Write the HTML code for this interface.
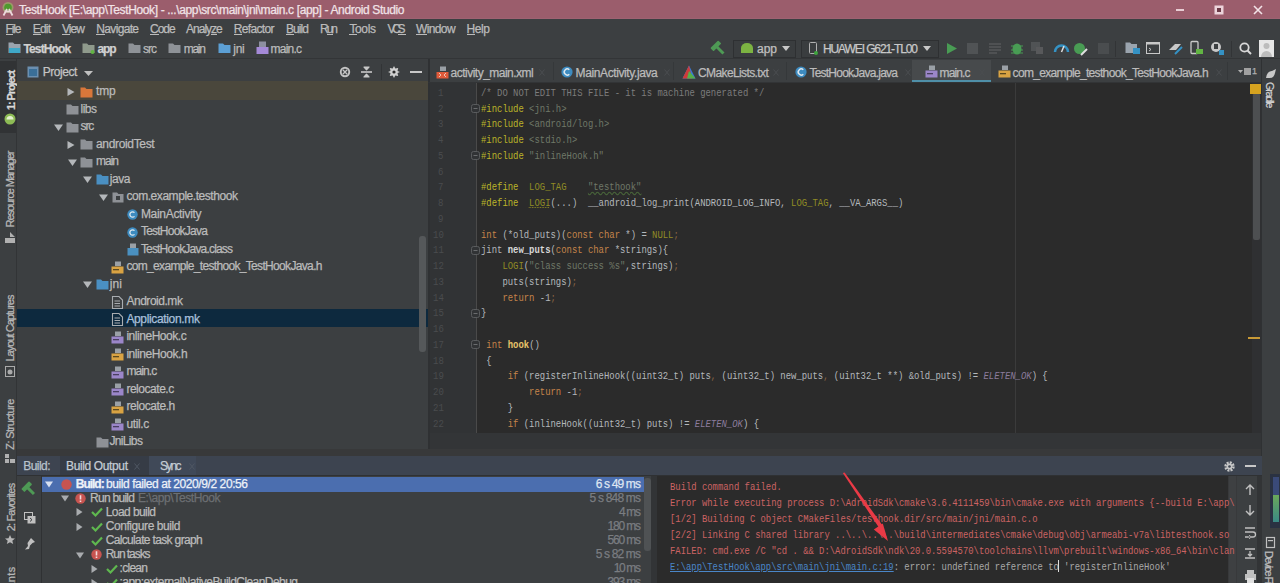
<!DOCTYPE html>
<html><head><meta charset="utf-8">
<style>
*{margin:0;padding:0;box-sizing:border-box}
html,body{width:1280px;height:583px;overflow:hidden;background:#3c3f41;font-family:"Liberation Sans",sans-serif;font-size:12px;color:#bbbbbb;position:relative}
.a{position:absolute}
.t{position:absolute;white-space:pre;-webkit-text-stroke:0.25px currentColor}
.c{position:absolute;white-space:pre;font-family:"Liberation Mono",monospace;color:#b4b8bc}
svg{overflow:visible}
</style></head><body>
<div class="a" style="left:0px;top:0px;width:1280px;height:19px;background:#9b5d6c;"></div>
<div class="a" style="left:0px;top:18px;width:1280px;height:1px;background:#9e6272;"></div>
<svg class="a" style="left:0px;top:0px;" width="18" height="19" viewBox="0 0 18 19"><circle cx="8" cy="7.5" r="5.5" fill="#9cc86a" opacity=".55"/><circle cx="8" cy="7.5" r="3.8" fill="#4f9a2e"/><path d="M3.5 15.5 L7 9 M12.5 15.5 L9 9 M4.5 11.5 H11.5" stroke="#ecd8dc" stroke-width="1.8" fill="none"/></svg>
<div class="t" style="left:19.00px;top:3.96px;color:#f1e3e7;font-size:12px;line-height:12px;letter-spacing:-0.359px;">TestHook [E:\app\TestHook] - ...\app\src\main\jni\main.c [app] - Android Studio</div>
<div class="a" style="left:1176px;top:9px;width:8px;height:2px;background:#e8cdd4;"></div>
<svg class="a" style="left:1214px;top:5px;" width="10" height="10" viewBox="0 0 10 10"><rect x="0.5" y="0.5" width="9" height="9" fill="#ecd3da"/><rect x="3" y="3" width="4" height="4" fill="#6b3a47"/></svg>
<svg class="a" style="left:1253px;top:5px;" width="10" height="10" viewBox="0 0 10 10"><path d="M1 1 L9 9 M9 1 L1 9" stroke="#f3e3e8" stroke-width="1.6"/></svg>
<div class="a" style="left:0px;top:19px;width:1280px;height:18px;background:#3c3f41;"></div>
<div class="t" style="left:5.60px;top:22.96px;color:#bbbbbb;font-size:12px;line-height:12px;letter-spacing:-1.207px;">File</div>
<div class="a" style="left:5.6px;top:34px;width:7.3px;height:1px;background:#bbbbbb;"></div>
<div class="t" style="left:32.80px;top:22.96px;color:#bbbbbb;font-size:12px;line-height:12px;letter-spacing:-0.833px;">Edit</div>
<div class="a" style="left:32.8px;top:34px;width:8.0px;height:1px;background:#bbbbbb;"></div>
<div class="t" style="left:61.90px;top:22.96px;color:#bbbbbb;font-size:12px;line-height:12px;letter-spacing:-0.900px;">View</div>
<div class="a" style="left:61.9px;top:34px;width:8.0px;height:1px;background:#bbbbbb;"></div>
<div class="t" style="left:96.30px;top:22.96px;color:#bbbbbb;font-size:12px;line-height:12px;letter-spacing:-0.663px;">Navigate</div>
<div class="a" style="left:96.3px;top:34px;width:8.7px;height:1px;background:#bbbbbb;"></div>
<div class="t" style="left:150.00px;top:22.96px;color:#bbbbbb;font-size:12px;line-height:12px;letter-spacing:-1.027px;">Code</div>
<div class="a" style="left:150.0px;top:34px;width:8.7px;height:1px;background:#bbbbbb;"></div>
<div class="t" style="left:186.00px;top:22.96px;color:#bbbbbb;font-size:12px;line-height:12px;letter-spacing:-0.987px;">Analyze</div>
<div class="a" style="left:211.1px;top:34px;width:6.0px;height:1px;background:#bbbbbb;"></div>
<div class="t" style="left:233.80px;top:22.96px;color:#bbbbbb;font-size:12px;line-height:12px;letter-spacing:-0.680px;">Refactor</div>
<div class="a" style="left:233.8px;top:34px;width:8.7px;height:1px;background:#bbbbbb;"></div>
<div class="t" style="left:286.00px;top:22.96px;color:#bbbbbb;font-size:12px;line-height:12px;letter-spacing:-0.925px;">Build</div>
<div class="a" style="left:286.0px;top:34px;width:8.0px;height:1px;background:#bbbbbb;"></div>
<div class="t" style="left:320.00px;top:22.96px;color:#bbbbbb;font-size:12px;line-height:12px;letter-spacing:-2.010px;">Run</div>
<div class="a" style="left:326.7px;top:34px;width:6.7px;height:1px;background:#bbbbbb;"></div>
<div class="t" style="left:349.40px;top:22.96px;color:#bbbbbb;font-size:12px;line-height:12px;letter-spacing:-0.355px;">Tools</div>
<div class="a" style="left:349.4px;top:34px;width:7.3px;height:1px;background:#bbbbbb;"></div>
<div class="t" style="left:387.50px;top:22.96px;color:#bbbbbb;font-size:12px;line-height:12px;letter-spacing:-3.280px;">VCS</div>
<div class="a" style="left:397.6px;top:34px;width:8.0px;height:1px;background:#bbbbbb;"></div>
<div class="t" style="left:416.00px;top:22.96px;color:#bbbbbb;font-size:12px;line-height:12px;letter-spacing:-0.624px;">Window</div>
<div class="a" style="left:416.0px;top:34px;width:11.3px;height:1px;background:#bbbbbb;"></div>
<div class="t" style="left:466.60px;top:22.96px;color:#bbbbbb;font-size:12px;line-height:12px;letter-spacing:-0.420px;">Help</div>
<div class="a" style="left:466.6px;top:34px;width:8.7px;height:1px;background:#bbbbbb;"></div>
<div class="a" style="left:0px;top:37px;width:1280px;height:22px;background:#3c3f41;"></div>
<div class="a" style="left:0px;top:58px;width:1280px;height:1px;background:#333537;"></div>
<svg class="a" style="left:8px;top:41px;" width="13" height="14" viewBox="0 0 13 14"><path d="M0.5 1.5 H5 L6.5 3 H12.5 V12 H0.5 Z" fill="#9aa4ae"/><rect x="1" y="7" width="11" height="5" fill="#3fa8c8"/></svg>
<div class="t" style="left:23.40px;top:42.96px;color:#d0d0d0;font-size:12px;line-height:12px;letter-spacing:-0.846px;font-weight:bold;">TestHook</div>
<svg class="a" style="left:82px;top:42px;" width="13" height="12" viewBox="0 0 13 12"><path d="M0.5 1.5 H5 L6.5 3 H12.5 V11 H0.5 Z" fill="#8f9a8c"/><circle cx="10.5" cy="10" r="2" fill="#62b543"/></svg>
<div class="t" style="left:97.50px;top:42.96px;color:#d0d0d0;font-size:12px;line-height:12px;letter-spacing:-1.180px;font-weight:bold;">app</div>
<svg class="a" style="left:128px;top:42px;" width="13" height="12" viewBox="0 0 13 12"><path d="M0.5 1.5 H5 L6.5 3 H12.5 V11 H0.5 Z" fill="#8e9297"/></svg>
<div class="t" style="left:143.00px;top:42.96px;color:#bbbbbb;font-size:12px;line-height:12px;letter-spacing:-1.010px;">src</div>
<svg class="a" style="left:168px;top:42px;" width="13" height="12" viewBox="0 0 13 12"><path d="M0.5 1.5 H5 L6.5 3 H12.5 V11 H0.5 Z" fill="#8e9297"/></svg>
<div class="t" style="left:183.70px;top:42.96px;color:#bbbbbb;font-size:12px;line-height:12px;letter-spacing:-1.247px;">main</div>
<svg class="a" style="left:218px;top:42px;" width="13" height="12" viewBox="0 0 13 12"><path d="M0.5 1.5 H5 L6.5 3 H12.5 V11 H0.5 Z" fill="#5c9fd4"/></svg>
<div class="t" style="left:233.30px;top:42.96px;color:#bbbbbb;font-size:12px;line-height:12px;letter-spacing:-0.300px;">jni</div>
<svg class="a" style="left:256px;top:41px;" width="13" height="14" viewBox="0 0 13 14"><rect x="3" y="0.5" width="7" height="6" fill="#8d8fa0"/><rect x="0.5" y="6" width="12" height="7" fill="#a58ad8"/></svg>
<div class="t" style="left:270.60px;top:42.96px;color:#bbbbbb;font-size:12px;line-height:12px;letter-spacing:-0.788px;">main.c</div>
<svg class="a" style="left:711px;top:41px;" width="15" height="15" viewBox="0 0 15 15"><g transform="rotate(-45 7.5 7.5)"><rect x="2" y="1.5" width="11" height="4.5" rx="0.8" fill="#4e9a55"/><rect x="6" y="5" width="3" height="9.5" fill="#4e9a55"/></g></svg>
<div class="a" style="left:733px;top:40px;width:63px;height:18px;background:#3a3d3f;border:1px solid #2e3032"></div>
<svg class="a" style="left:740px;top:43px;" width="14" height="11" viewBox="0 0 14 11"><path d="M1 10 V5 A6 5 0 0 1 13 5 V10 Z" fill="#7cb342"/></svg>
<div class="t" style="left:757.00px;top:42.96px;color:#c0c0c0;font-size:12px;line-height:12px;letter-spacing:-0.020px;">app</div>
<svg class="a" style="left:782px;top:46px;" width="8" height="5" viewBox="0 0 8 5"><path d="M0 0 H8 L4 5 Z" fill="#c8c8c8"/></svg>
<div class="a" style="left:801px;top:40px;width:138px;height:18px;background:#3a3d3f;border:1px solid #2e3032"></div>
<svg class="a" style="left:809px;top:42px;" width="9" height="13" viewBox="0 0 9 13"><rect x="0.5" y="0.5" width="7" height="11" rx="1" fill="none" stroke="#b0b0b0"/><circle cx="7" cy="11" r="2" fill="#3ea63e"/></svg>
<div class="t" style="left:823.00px;top:42.96px;color:#c8c8c8;font-size:12px;line-height:12px;letter-spacing:-1.107px;">HUAWEI G621-TL00</div>
<svg class="a" style="left:923px;top:46px;" width="8" height="5" viewBox="0 0 8 5"><path d="M0 0 H8 L4 5 Z" fill="#c8c8c8"/></svg>
<svg class="a" style="left:946px;top:42px;" width="12" height="13" viewBox="0 0 12 13"><path d="M1 1 L11 6.5 L1 12 Z" fill="#499c54"/></svg>
<svg class="a" style="left:967px;top:43px;" width="11" height="11" viewBox="0 0 11 11"><rect x="0" y="0" width="11" height="11" fill="#505355"/></svg>
<svg class="a" style="left:989px;top:43px;" width="12" height="11" viewBox="0 0 12 11"><path d="M0 1H12M0 4H12M0 7H12M0 10H8" stroke="#55585a" stroke-width="1.5"/></svg>
<svg class="a" style="left:1010px;top:41px;" width="14" height="14" viewBox="0 0 14 14"><ellipse cx="7" cy="8" rx="4.5" ry="5.5" fill="#499c54"/><path d="M1 5H13M1 9H13M1 12H13" stroke="#499c54" stroke-width="1.2"/></svg>
<svg class="a" style="left:1031px;top:42px;" width="12" height="12" viewBox="0 0 12 12"><rect x="0" y="0" width="9" height="9" fill="#505355"/><rect x="5" y="5" width="7" height="7" fill="#58595b"/></svg>
<svg class="a" style="left:1054px;top:42px;" width="15" height="12" viewBox="0 0 15 12"><path d="M1 10 A6.5 6.5 0 0 1 14 10" fill="none" stroke="#3592c4" stroke-width="2.5"/><path d="M7.5 10 L10 4" stroke="#e0e0e0" stroke-width="1.5"/></svg>
<svg class="a" style="left:1073px;top:41px;" width="15" height="15" viewBox="0 0 15 15"><circle cx="6.5" cy="7.5" r="5.5" fill="#499c54"/><path d="M8 14 L14 8" stroke="#e0e0e0" stroke-width="2"/></svg>
<svg class="a" style="left:1098px;top:43px;" width="11" height="11" viewBox="0 0 11 11"><rect x="0" y="0" width="11" height="11" fill="#4a4d4f"/></svg>
<div class="a" style="left:1115px;top:41px;width:1px;height:16px;background:#323436;"></div>
<svg class="a" style="left:1125px;top:41px;" width="16" height="14" viewBox="0 0 16 14"><path d="M0.5 1.5 H5 L6.5 3 H12 V12 H0.5 Z" fill="#9aa4ae"/><rect x="8" y="7" width="7" height="6" fill="#3592c4"/></svg>
<svg class="a" style="left:1146px;top:42px;" width="14" height="12" viewBox="0 0 14 12"><rect x="0.5" y="0.5" width="13" height="11" fill="none" stroke="#c8c8c8"/><rect x="0.5" y="0.5" width="13" height="2" fill="#c8c8c8"/><path d="M3 6 L5 7.5 L3 9" stroke="#c8c8c8" fill="none"/></svg>
<svg class="a" style="left:1168px;top:41px;" width="15" height="14" viewBox="0 0 15 14"><path d="M1 9 L7 3 L13 3 L8 9 Z" fill="#c8c8c8"/><path d="M7 13 L14 6" stroke="#3592c4" stroke-width="2"/></svg>
<svg class="a" style="left:1190px;top:41px;" width="14" height="14" viewBox="0 0 14 14"><rect x="1" y="0.5" width="7" height="12" rx="1" fill="none" stroke="#c8c8c8" stroke-width="1.3"/><rect x="6" y="8" width="7" height="5" fill="#62b543"/></svg>
<svg class="a" style="left:1210px;top:41px;" width="15" height="15" viewBox="0 0 15 15"><circle cx="6" cy="6" r="5" fill="#c8c8c8"/><rect x="4" y="3" width="4" height="5" fill="#3c3f41"/><rect x="9" y="9" width="5" height="5" fill="#3592c4"/></svg>
<div class="a" style="left:1231px;top:41px;width:1px;height:16px;background:#323436;"></div>
<svg class="a" style="left:1239px;top:42px;" width="13" height="13" viewBox="0 0 13 13"><circle cx="5.5" cy="5.5" r="4.2" fill="none" stroke="#d8d8d8" stroke-width="1.8"/><path d="M8.5 8.5 L12 12" stroke="#d8d8d8" stroke-width="2"/></svg>
<svg class="a" style="left:1259px;top:40px;" width="15" height="17" viewBox="0 0 15 17"><rect x="0" y="0" width="15" height="17" fill="#e6e6e6"/><circle cx="7.5" cy="6" r="3" fill="#bcbcbc"/><path d="M2 17 A5.5 6 0 0 1 13 17 Z" fill="#bcbcbc"/></svg>
<div class="a" style="left:0px;top:59px;width:17px;height:524px;background:#3c3f41;"></div>
<div class="a" style="left:16px;top:59px;width:1px;height:524px;background:#323436;"></div>
<div class="a" style="left:0px;top:61px;width:16px;height:72px;background:#313335;"></div>
<div class="t" style="left:-11.20px;top:85.18px;width:44.00px;font-size:11px;line-height:11px;letter-spacing:-1.123px;color:#d8d8d8;transform:rotate(-90deg);text-align:center;font-weight:bold">1: Project</div>
<svg class="a" style="left:4px;top:113px;" width="12" height="12" viewBox="0 0 12 12"><circle cx="6" cy="6" r="5.5" fill="#8dbb55"/><path d="M2.5 6.5 A3.5 3.5 0 0 1 9.5 6.5 Z" fill="#e4f0d0"/></svg>
<div class="t" style="left:-29.70px;top:183.68px;width:81.00px;font-size:11px;line-height:11px;letter-spacing:-1.104px;color:#b8b8b8;transform:rotate(-90deg);text-align:center;">Resource Manager</div>
<svg class="a" style="left:5px;top:232px;" width="10" height="11" viewBox="0 0 10 11"><path d="M5 0 L10 5 L5 5 Z M0 6H5V11H0Z M5 6H10V11H5Z" fill="#b0b0b0"/></svg>
<div class="t" style="left:-24.70px;top:322.68px;width:71.00px;font-size:11px;line-height:11px;letter-spacing:-0.981px;color:#b8b8b8;transform:rotate(-90deg);text-align:center;">Layout Captures</div>
<svg class="a" style="left:5px;top:366px;" width="10" height="11" viewBox="0 0 10 11"><rect x="0.5" y="0.5" width="9" height="10" fill="none" stroke="#aaa"/><circle cx="5" cy="6" r="2.5" fill="#aaa"/></svg>
<div class="t" style="left:-16.70px;top:418.68px;width:55.00px;font-size:11px;line-height:11px;letter-spacing:-0.589px;color:#b8b8b8;transform:rotate(-90deg);text-align:center;">Z: Structure</div>
<svg class="a" style="left:5px;top:454px;" width="10" height="9" viewBox="0 0 10 9"><rect x="0" y="0" width="4" height="4" fill="#b0b0b0"/><rect x="5" y="5" width="5" height="4" fill="#b0b0b0"/><rect x="0" y="5" width="4" height="4" fill="#b0b0b0"/></svg>
<div class="t" style="left:-15.45px;top:501.93px;width:52.50px;font-size:11px;line-height:11px;letter-spacing:-0.816px;color:#b8b8b8;transform:rotate(-90deg);text-align:center;">2: Favorites</div>
<svg class="a" style="left:5px;top:535px;" width="10" height="9" viewBox="0 0 10 9"><path d="M5 0 L6.5 3.2 L10 3.5 L7.3 5.8 L8.2 9 L5 7.2 L1.8 9 L2.7 5.8 L0 3.5 L3.5 3.2 Z" fill="#b8b8b8"/></svg>
<div class="t" style="left:-27.20px;top:597.18px;width:76.00px;font-size:11px;line-height:11px;letter-spacing:0.381px;color:#b8b8b8;transform:rotate(-90deg);text-align:center;">Build Variants</div>
<div class="a" style="left:17px;top:59px;width:411px;height:397px;background:#3c3f41;"></div>
<div class="a" style="left:17px;top:82px;width:411px;height:1px;background:#35373a;"></div>
<svg class="a" style="left:27px;top:66px;" width="12" height="12" viewBox="0 0 12 12"><rect x="0.5" y="0.5" width="11" height="11" fill="#6b8fb0"/><rect x="2" y="3" width="8" height="7" fill="#3a6f98"/></svg>
<div class="t" style="left:42.80px;top:66.46px;color:#c4c4c4;font-size:12px;line-height:12px;letter-spacing:-0.487px;">Project</div>
<svg class="a" style="left:84px;top:71px;" width="9" height="5" viewBox="0 0 9 5"><path d="M0 0 H9 L4.5 5 Z" fill="#c0c0c0"/></svg>
<svg class="a" style="left:339px;top:66px;" width="12" height="12" viewBox="0 0 12 12"><circle cx="6" cy="6" r="5.2" fill="#c4c4c4"/><circle cx="6" cy="6" r="3.3" fill="#3c3f41"/><path d="M3.8 3.8 L8.2 8.2 M8.2 3.8 L3.8 8.2" stroke="#c4c4c4" stroke-width="1.3"/></svg>
<svg class="a" style="left:361px;top:66px;" width="11" height="12" viewBox="0 0 11 12"><path d="M0 6 H11" stroke="#c8c8c8" stroke-width="1.6"/><path d="M3 1 L5.5 3.8 L8 1 Z M3 11 L5.5 8.2 L8 11 Z" fill="#c8c8c8" stroke="#c8c8c8" stroke-width="1.2" stroke-linejoin="round"/></svg>
<div class="a" style="left:381px;top:64px;width:1px;height:16px;background:#323436;"></div>
<svg class="a" style="left:388px;top:66px;" width="12" height="12" viewBox="0 0 12 12"><path d="M6 0 L7.3 2.5 L10.2 2 L9.5 5 L12 6 L9.5 7 L10.2 10 L7.3 9.5 L6 12 L4.7 9.5 L1.8 10 L2.5 7 L0 6 L2.5 5 L1.8 2 L4.7 2.5 Z" fill="#d0d0d0"/><circle cx="6" cy="6" r="1.6" fill="#2a2a2a"/></svg>
<div class="a" style="left:410px;top:71px;width:12px;height:2px;background:#c8c8c8;"></div>
<div class="a" style="left:17px;top:81px;width:411px;height:19px;background:#4a473c;"></div>
<div class="a" style="left:17px;top:309px;width:411px;height:18px;background:#0d293e;"></div>
<svg class="a" style="left:67px;top:88px;" width="8" height="8" viewBox="0 0 8 8"><path d="M0.5 0 L7.5 4 L0.5 8 Z" fill="#b4b7ba"/></svg>
<svg class="a" style="left:80px;top:87px;" width="13" height="11" viewBox="0 0 13 11"><path d="M0.5 0.5 H5 L6.5 2 H12.5 V10.5 H0.5 Z" fill="#d9773a"/></svg>
<div class="t" style="left:96.00px;top:85.36px;color:#bbbbbb;font-size:12px;line-height:12px;letter-spacing:-0.190px;">tmp</div>
<svg class="a" style="left:66px;top:104px;" width="13" height="11" viewBox="0 0 13 11"><path d="M0.5 0.5 H5 L6.5 2 H12.5 V10.5 H0.5 Z" fill="#8e9196"/></svg>
<div class="t" style="left:80.60px;top:102.86px;color:#bbbbbb;font-size:12px;line-height:12px;letter-spacing:-0.567px;">libs</div>
<svg class="a" style="left:54px;top:124px;" width="9" height="7" viewBox="0 0 9 7"><path d="M0 0.5 H9 L4.5 7 Z" fill="#b4b7ba"/></svg>
<svg class="a" style="left:66px;top:122px;" width="13" height="11" viewBox="0 0 13 11"><path d="M0.5 0.5 H5 L6.5 2 H12.5 V10.5 H0.5 Z" fill="#8e9196"/></svg>
<div class="t" style="left:80.60px;top:120.36px;color:#bbbbbb;font-size:12px;line-height:12px;letter-spacing:-1.110px;">src</div>
<svg class="a" style="left:67px;top:141px;" width="8" height="8" viewBox="0 0 8 8"><path d="M0.5 0 L7.5 4 L0.5 8 Z" fill="#b4b7ba"/></svg>
<svg class="a" style="left:80px;top:139px;" width="13" height="11" viewBox="0 0 13 11"><path d="M0.5 0.5 H5 L6.5 2 H12.5 V10.5 H0.5 Z" fill="#8e9196"/></svg>
<div class="t" style="left:96.00px;top:137.86px;color:#bbbbbb;font-size:12px;line-height:12px;letter-spacing:-0.334px;">androidTest</div>
<svg class="a" style="left:68px;top:159px;" width="9" height="7" viewBox="0 0 9 7"><path d="M0 0.5 H9 L4.5 7 Z" fill="#b4b7ba"/></svg>
<svg class="a" style="left:80px;top:157px;" width="13" height="11" viewBox="0 0 13 11"><path d="M0.5 0.5 H5 L6.5 2 H12.5 V10.5 H0.5 Z" fill="#8e9196"/></svg>
<div class="t" style="left:96.00px;top:155.36px;color:#bbbbbb;font-size:12px;line-height:12px;letter-spacing:-1.013px;">main</div>
<svg class="a" style="left:83px;top:176px;" width="9" height="7" viewBox="0 0 9 7"><path d="M0 0.5 H9 L4.5 7 Z" fill="#b4b7ba"/></svg>
<svg class="a" style="left:96px;top:174px;" width="13" height="11" viewBox="0 0 13 11"><path d="M0.5 0.5 H5 L6.5 2 H12.5 V10.5 H0.5 Z" fill="#4a8fc2"/></svg>
<div class="t" style="left:109.80px;top:172.86px;color:#bbbbbb;font-size:12px;line-height:12px;letter-spacing:-0.493px;">java</div>
<svg class="a" style="left:98.5px;top:194px;" width="9" height="7" viewBox="0 0 9 7"><path d="M0 0.5 H9 L4.5 7 Z" fill="#b4b7ba"/></svg>
<svg class="a" style="left:112px;top:192px;" width="12" height="11" viewBox="0 0 12 11"><path d="M0.5 0.5 H5 L6.5 2 H11.5 V10.5 H0.5 Z" fill="#8e9196"/><rect x="4" y="4" width="4" height="4" fill="#3c3f41"/></svg>
<div class="t" style="left:126.40px;top:190.36px;color:#bbbbbb;font-size:12px;line-height:12px;letter-spacing:-0.448px;">com.example.testhook</div>
<svg class="a" style="left:127px;top:209px;" width="11" height="11" viewBox="0 0 11 11"><circle cx="5.5" cy="5.5" r="5.2" fill="#3d8bc0"/><path d="M7.5 3.6 A2.7 2.7 0 1 0 7.5 7.4" fill="none" stroke="#dfe9f0" stroke-width="1.3"/></svg>
<div class="t" style="left:140.90px;top:207.86px;color:#bbbbbb;font-size:12px;line-height:12px;letter-spacing:-0.302px;">MainActivity</div>
<svg class="a" style="left:127px;top:227px;" width="11" height="11" viewBox="0 0 11 11"><circle cx="5.5" cy="5.5" r="5.2" fill="#3d8bc0"/><path d="M7.5 3.6 A2.7 2.7 0 1 0 7.5 7.4" fill="none" stroke="#dfe9f0" stroke-width="1.3"/></svg>
<div class="t" style="left:140.90px;top:225.36px;color:#bbbbbb;font-size:12px;line-height:12px;letter-spacing:-0.756px;">TestHookJava</div>
<svg class="a" style="left:127px;top:243px;" width="12" height="13" viewBox="0 0 12 13"><rect x="0.5" y="5" width="11" height="7.5" fill="#4a90c0"/><path d="M3 0.5 H9 V5 H3 Z" fill="#9aa0a6"/></svg>
<div class="t" style="left:140.90px;top:242.86px;color:#bbbbbb;font-size:12px;line-height:12px;letter-spacing:-0.819px;">TestHookJava.class</div>
<svg class="a" style="left:111px;top:261px;" width="13" height="13" viewBox="0 0 13 13"><path d="M4 0.5 H10 V5 H4 Z" fill="#9aa0a6"/><rect x="0.5" y="5.5" width="12" height="7" fill="#d9a343"/><rect x="2" y="8" width="6" height="1.3" fill="#5c4a20"/></svg>
<div class="t" style="left:126.40px;top:260.36px;color:#bbbbbb;font-size:12px;line-height:12px;letter-spacing:-0.668px;">com_example_testhook_TestHookJava.h</div>
<svg class="a" style="left:83px;top:281px;" width="9" height="7" viewBox="0 0 9 7"><path d="M0 0.5 H9 L4.5 7 Z" fill="#b4b7ba"/></svg>
<svg class="a" style="left:96px;top:279px;" width="13" height="11" viewBox="0 0 13 11"><path d="M0.5 0.5 H5 L6.5 2 H12.5 V10.5 H0.5 Z" fill="#4a8fc2"/></svg>
<div class="t" style="left:109.80px;top:277.86px;color:#bbbbbb;font-size:12px;line-height:12px;letter-spacing:0.100px;">jni</div>
<svg class="a" style="left:112px;top:296px;" width="11" height="13" viewBox="0 0 11 13"><path d="M0.5 0.5 H7 L10.5 4 V12.5 H0.5 Z" fill="none" stroke="#a8acb0" stroke-width="1.1"/><path d="M2.5 5H8M2.5 7.5H8M2.5 10H8" stroke="#a8acb0"/></svg>
<div class="t" style="left:126.40px;top:295.36px;color:#bbbbbb;font-size:12px;line-height:12px;letter-spacing:-0.464px;">Android.mk</div>
<svg class="a" style="left:112px;top:313px;" width="11" height="13" viewBox="0 0 11 13"><path d="M0.5 0.5 H7 L10.5 4 V12.5 H0.5 Z" fill="none" stroke="#a8acb0" stroke-width="1.1"/><path d="M2.5 5H8M2.5 7.5H8M2.5 10H8" stroke="#a8acb0"/></svg>
<div class="t" style="left:126.40px;top:312.86px;color:#a9c0dc;font-size:12px;line-height:12px;letter-spacing:-0.348px;">Application.mk</div>
<svg class="a" style="left:111px;top:331px;" width="13" height="13" viewBox="0 0 13 13"><path d="M4 0.5 H10 V5 H4 Z" fill="#9aa0a6"/><rect x="0.5" y="5.5" width="12" height="7" fill="#9b86c9"/><rect x="2" y="8" width="6" height="1.3" fill="#4a3f60"/></svg>
<div class="t" style="left:126.40px;top:330.36px;color:#bbbbbb;font-size:12px;line-height:12px;letter-spacing:-0.458px;">inlineHook.c</div>
<svg class="a" style="left:111px;top:348px;" width="13" height="13" viewBox="0 0 13 13"><path d="M4 0.5 H10 V5 H4 Z" fill="#9aa0a6"/><rect x="0.5" y="5.5" width="12" height="7" fill="#d9a343"/><rect x="2" y="8" width="6" height="1.3" fill="#5c4a20"/></svg>
<div class="t" style="left:126.40px;top:347.86px;color:#bbbbbb;font-size:12px;line-height:12px;letter-spacing:-0.433px;">inlineHook.h</div>
<svg class="a" style="left:111px;top:366px;" width="13" height="13" viewBox="0 0 13 13"><path d="M4 0.5 H10 V5 H4 Z" fill="#9aa0a6"/><rect x="0.5" y="5.5" width="12" height="7" fill="#9b86c9"/><rect x="2" y="8" width="6" height="1.3" fill="#4a3f60"/></svg>
<div class="t" style="left:126.40px;top:365.36px;color:#bbbbbb;font-size:12px;line-height:12px;letter-spacing:-0.888px;">main.c</div>
<svg class="a" style="left:111px;top:383px;" width="13" height="13" viewBox="0 0 13 13"><path d="M4 0.5 H10 V5 H4 Z" fill="#9aa0a6"/><rect x="0.5" y="5.5" width="12" height="7" fill="#9b86c9"/><rect x="2" y="8" width="6" height="1.3" fill="#4a3f60"/></svg>
<div class="t" style="left:126.40px;top:382.86px;color:#bbbbbb;font-size:12px;line-height:12px;letter-spacing:-0.469px;">relocate.c</div>
<svg class="a" style="left:111px;top:401px;" width="13" height="13" viewBox="0 0 13 13"><path d="M4 0.5 H10 V5 H4 Z" fill="#9aa0a6"/><rect x="0.5" y="5.5" width="12" height="7" fill="#d9a343"/><rect x="2" y="8" width="6" height="1.3" fill="#5c4a20"/></svg>
<div class="t" style="left:126.40px;top:400.36px;color:#bbbbbb;font-size:12px;line-height:12px;letter-spacing:-0.431px;">relocate.h</div>
<svg class="a" style="left:111px;top:418px;" width="13" height="13" viewBox="0 0 13 13"><path d="M4 0.5 H10 V5 H4 Z" fill="#9aa0a6"/><rect x="0.5" y="5.5" width="12" height="7" fill="#9b86c9"/><rect x="2" y="8" width="6" height="1.3" fill="#4a3f60"/></svg>
<div class="t" style="left:126.40px;top:417.86px;color:#bbbbbb;font-size:12px;line-height:12px;letter-spacing:-0.352px;">util.c</div>
<svg class="a" style="left:96px;top:437px;" width="13" height="11" viewBox="0 0 13 11"><path d="M0.5 0.5 H5 L6.5 2 H12.5 V10.5 H0.5 Z" fill="#8e9196"/></svg>
<div class="t" style="left:109.50px;top:435.36px;color:#bbbbbb;font-size:12px;line-height:12px;letter-spacing:-0.663px;">JniLibs</div>
<div class="a" style="left:419px;top:236px;width:7px;height:116px;background:#55585a;border-radius:3px"></div>
<div class="a" style="left:428px;top:59px;width:834px;height:24px;background:#3c3f41;"></div>
<div class="a" style="left:428px;top:59px;width:2px;height:397px;background:#2f3133;"></div>
<div class="a" style="left:428px;top:82px;width:834px;height:1px;background:#323436;"></div>
<div class="a" style="left:912px;top:60px;width:79px;height:20px;background:#474a4c;"></div>
<div class="a" style="left:912px;top:80px;width:79px;height:2px;background:#4f8fa8;"></div>
<div class="a" style="left:553px;top:62px;width:1px;height:18px;background:#35383a;"></div>
<div class="a" style="left:673px;top:62px;width:1px;height:18px;background:#35383a;"></div>
<div class="a" style="left:786px;top:62px;width:1px;height:18px;background:#35383a;"></div>
<div class="a" style="left:1227px;top:62px;width:1px;height:18px;background:#35383a;"></div>
<svg class="a" style="left:436px;top:66px;" width="13" height="13" viewBox="0 0 13 13"><path d="M4 0.5 H10 V5 H4 Z" fill="#9aa0a6"/><rect x="0.5" y="6" width="12" height="6.5" fill="#e05a3a"/><path d="M3 7 L5 9 L3 11 M10 7 L8 9 L10 11" stroke="#f0d0c0" fill="none" stroke-width=".9"/></svg>
<div class="t" style="left:450.60px;top:66.96px;color:#bbbbbb;font-size:12px;line-height:12px;letter-spacing:-0.514px;">activity_main.xml</div>
<svg class="a" style="left:539px;top:69px;" width="6" height="7" viewBox="0 0 6 7"><path d="M0.5 0.5 L5.5 6.5 M5.5 0.5 L0.5 6.5" stroke="#4a4d50" stroke-width="1"/></svg>
<svg class="a" style="left:561px;top:66px;" width="12" height="12" viewBox="0 0 12 12"><circle cx="6" cy="6" r="5.6" fill="#3d8bc0"/><path d="M8.3 3.8 A3 3 0 1 0 8.3 8.2" fill="none" stroke="#dfe9f0" stroke-width="1.4"/></svg>
<div class="t" style="left:575.60px;top:66.96px;color:#bbbbbb;font-size:12px;line-height:12px;letter-spacing:-0.394px;">MainActivity.java</div>
<svg class="a" style="left:664px;top:69px;" width="6" height="7" viewBox="0 0 6 7"><path d="M0.5 0.5 L5.5 6.5 M5.5 0.5 L0.5 6.5" stroke="#4a4d50" stroke-width="1"/></svg>
<svg class="a" style="left:682px;top:65px;" width="14" height="14" viewBox="0 0 14 14"><path d="M7 0.5 L13.5 13.5 H0.5 Z" fill="#3a7bd5"/><path d="M7 0.5 L10 13.5 H0.5 Z" fill="#cf3a3a"/><path d="M7 6 L13.5 13.5 H5 Z" fill="#56b04a"/></svg>
<div class="t" style="left:698.00px;top:66.96px;color:#bbbbbb;font-size:12px;line-height:12px;letter-spacing:-0.608px;">CMakeLists.txt</div>
<svg class="a" style="left:773px;top:69px;" width="6" height="7" viewBox="0 0 6 7"><path d="M0.5 0.5 L5.5 6.5 M5.5 0.5 L0.5 6.5" stroke="#4a4d50" stroke-width="1"/></svg>
<svg class="a" style="left:795px;top:66px;" width="12" height="12" viewBox="0 0 12 12"><circle cx="6" cy="6" r="5.6" fill="#3d8bc0"/><path d="M8.3 3.8 A3 3 0 1 0 8.3 8.2" fill="none" stroke="#dfe9f0" stroke-width="1.4"/></svg>
<div class="t" style="left:809.40px;top:66.96px;color:#bbbbbb;font-size:12px;line-height:12px;letter-spacing:-0.759px;">TestHookJava.java</div>
<svg class="a" style="left:905px;top:69px;" width="6" height="7" viewBox="0 0 6 7"><path d="M0.5 0.5 L5.5 6.5 M5.5 0.5 L0.5 6.5" stroke="#4a4d50" stroke-width="1"/></svg>
<svg class="a" style="left:925px;top:65px;" width="13" height="13" viewBox="0 0 13 13"><path d="M4 0.5 H10 V5 H4 Z" fill="#9aa0a6"/><rect x="0.5" y="5.5" width="12" height="7" fill="#9b86c9"/><rect x="2" y="8" width="6" height="1.3" fill="#4a3f60"/></svg>
<div class="t" style="left:939.50px;top:66.96px;color:#bbbbbb;font-size:12px;line-height:12px;letter-spacing:-0.848px;">main.c</div>
<svg class="a" style="left:979px;top:69px;" width="6" height="7" viewBox="0 0 6 7"><path d="M0.5 0.5 L5.5 6.5 M5.5 0.5 L0.5 6.5" stroke="#4a4d50" stroke-width="1"/></svg>
<svg class="a" style="left:998px;top:65px;" width="13" height="13" viewBox="0 0 13 13"><path d="M4 0.5 H10 V5 H4 Z" fill="#9aa0a6"/><rect x="0.5" y="5.5" width="12" height="7" fill="#d9a343"/><rect x="2" y="8" width="6" height="1.3" fill="#5c4a20"/></svg>
<div class="t" style="left:1012.60px;top:66.96px;color:#bbbbbb;font-size:12px;line-height:12px;letter-spacing:-0.668px;">com_example_testhook_TestHookJava.h</div>
<svg class="a" style="left:1216px;top:69px;" width="6" height="7" viewBox="0 0 6 7"><path d="M0.5 0.5 L5.5 6.5 M5.5 0.5 L0.5 6.5" stroke="#4a4d50" stroke-width="1"/></svg>
<svg class="a" style="left:1238px;top:70px;" width="5" height="3" viewBox="0 0 5 3"><path d="M0 0 H5 L2.5 3 Z" fill="#b0b0b0"/></svg>
<div class="a" style="left:1244px;top:68px;width:7px;height:7px;background:#a0a0a0;"></div>
<div class="t" style="left:1252.00px;top:67.22px;color:#b0b0b0;font-size:9px;line-height:9px;letter-spacing:-1.495px;">1</div>
<div class="a" style="left:430px;top:83px;width:832px;height:373px;background:#2b2b2b;"></div>
<div class="a" style="left:430px;top:83px;width:46px;height:350px;background:#313335;"></div>
<div class="a" style="left:476px;top:83px;width:1px;height:350px;background:#4a4a4a;"></div>
<div class="a" style="left:1015px;top:83px;width:1px;height:350px;background:#3b3b3b;"></div>
<div class="a" style="left:1252px;top:83px;width:9px;height:350px;background:#2f3032;"></div>
<div class="a" style="left:1253px;top:93px;width:7px;height:147px;background:#4d4f51;border-radius:2px"></div>
<div class="a" style="left:1250px;top:84px;width:11px;height:10px;background:#d5a21f;"></div>
<div class="a" style="left:1248px;top:337px;width:12px;height:2px;background:#c89a36;"></div>
<div class="c" style="left:438.00px;top:87.90px;font-size:11.0px;line-height:11.0px;transform:scaleX(0.8182);transform-origin:0 0;"><span style="color:#4a4c4e">1</span></div>
<div class="c" style="left:481.00px;top:87.90px;font-size:11.0px;line-height:11.0px;transform:scaleX(0.8098);transform-origin:0 0;"><span style="color:#7c7c7c">/* DO NOT EDIT THIS FILE - it is machine generated */</span></div>
<div class="c" style="left:438.00px;top:103.65px;font-size:11.0px;line-height:11.0px;transform:scaleX(0.8182);transform-origin:0 0;"><span style="color:#4a4c4e">2</span></div>
<div class="c" style="left:481.00px;top:103.65px;font-size:11.0px;line-height:11.0px;transform:scaleX(0.8098);transform-origin:0 0;"><span style="color:#bbb529">#include</span><span style="color:#6f7868"> &lt;jni.h&gt;</span></div>
<div class="c" style="left:438.00px;top:119.40px;font-size:11.0px;line-height:11.0px;transform:scaleX(0.8182);transform-origin:0 0;"><span style="color:#4a4c4e">3</span></div>
<div class="c" style="left:481.00px;top:119.40px;font-size:11.0px;line-height:11.0px;transform:scaleX(0.8098);transform-origin:0 0;"><span style="color:#bbb529">#include</span><span style="color:#6f7868"> &lt;android/log.h&gt;</span></div>
<div class="c" style="left:438.00px;top:135.15px;font-size:11.0px;line-height:11.0px;transform:scaleX(0.8182);transform-origin:0 0;"><span style="color:#4a4c4e">4</span></div>
<div class="c" style="left:481.00px;top:135.15px;font-size:11.0px;line-height:11.0px;transform:scaleX(0.8098);transform-origin:0 0;"><span style="color:#bbb529">#include</span><span style="color:#6f7868"> &lt;stdio.h&gt;</span></div>
<div class="c" style="left:438.00px;top:150.90px;font-size:11.0px;line-height:11.0px;transform:scaleX(0.8182);transform-origin:0 0;"><span style="color:#4a4c4e">5</span></div>
<div class="c" style="left:481.00px;top:150.90px;font-size:11.0px;line-height:11.0px;transform:scaleX(0.8098);transform-origin:0 0;"><span style="color:#bbb529">#include</span><span style="color:#6f7868"> "inlineHook.h"</span></div>
<div class="c" style="left:438.00px;top:166.65px;font-size:11.0px;line-height:11.0px;transform:scaleX(0.8182);transform-origin:0 0;"><span style="color:#4a4c4e">6</span></div>
<div class="c" style="left:438.00px;top:182.40px;font-size:11.0px;line-height:11.0px;transform:scaleX(0.8182);transform-origin:0 0;"><span style="color:#4a4c4e">7</span></div>
<div class="c" style="left:481.00px;top:182.40px;font-size:11.0px;line-height:11.0px;transform:scaleX(0.8098);transform-origin:0 0;"><span style="color:#bbb529">#define</span><span style="color:#b4b8bc">  </span><span style="color:#908b25">LOG_TAG</span><span style="color:#b4b8bc">    </span><span style="color:#6f7868;text-decoration:underline wavy #4a6a3a">"testhook"</span></div>
<div class="c" style="left:438.00px;top:198.15px;font-size:11.0px;line-height:11.0px;transform:scaleX(0.8182);transform-origin:0 0;"><span style="color:#4a4c4e">8</span></div>
<div class="c" style="left:481.00px;top:198.15px;font-size:11.0px;line-height:11.0px;transform:scaleX(0.8098);transform-origin:0 0;"><span style="color:#bbb529">#define</span><span style="color:#b4b8bc">  </span><span style="color:#908b25;text-decoration:underline dotted">LOGI</span><span style="color:#b4b8bc">(...)  __android_log_print(ANDROID_LOG_INFO, </span><span style="color:#908b25">LOG_TAG</span><span style="color:#b4b8bc">, __VA_ARGS__)</span></div>
<div class="c" style="left:438.00px;top:213.90px;font-size:11.0px;line-height:11.0px;transform:scaleX(0.8182);transform-origin:0 0;"><span style="color:#4a4c4e">9</span></div>
<div class="c" style="left:432.60px;top:229.65px;font-size:11.0px;line-height:11.0px;transform:scaleX(0.8182);transform-origin:0 0;"><span style="color:#4a4c4e">10</span></div>
<div class="c" style="left:481.00px;top:229.65px;font-size:11.0px;line-height:11.0px;transform:scaleX(0.8098);transform-origin:0 0;"><span style="color:#c5844a">int</span><span style="color:#b4b8bc"> (*old_puts)(</span><span style="color:#c5844a">const char</span><span style="color:#b4b8bc"> *) = </span><span style="color:#908b25">NULL</span><span style="color:#8a6444">;</span></div>
<div class="c" style="left:432.60px;top:245.40px;font-size:11.0px;line-height:11.0px;transform:scaleX(0.8182);transform-origin:0 0;"><span style="color:#4a4c4e">11</span></div>
<div class="c" style="left:481.00px;top:245.40px;font-size:11.0px;line-height:11.0px;transform:scaleX(0.8098);transform-origin:0 0;"><span style="color:#b4b8bc">jint </span><span style="color:#d8d8d8;font-weight:bold">new_puts</span><span style="color:#b4b8bc">(</span><span style="color:#c5844a">const char</span><span style="color:#b4b8bc"> *strings){</span></div>
<div class="c" style="left:432.60px;top:261.15px;font-size:11.0px;line-height:11.0px;transform:scaleX(0.8182);transform-origin:0 0;"><span style="color:#4a4c4e">12</span></div>
<div class="c" style="left:481.00px;top:261.15px;font-size:11.0px;line-height:11.0px;transform:scaleX(0.8098);transform-origin:0 0;"><span style="color:#b4b8bc">    </span><span style="color:#908b25">LOGI</span><span style="color:#b4b8bc">(</span><span style="color:#6f7868">"class success %s"</span><span style="color:#b4b8bc">,strings)</span><span style="color:#8a6444">;</span></div>
<div class="c" style="left:432.60px;top:276.90px;font-size:11.0px;line-height:11.0px;transform:scaleX(0.8182);transform-origin:0 0;"><span style="color:#4a4c4e">13</span></div>
<div class="c" style="left:481.00px;top:276.90px;font-size:11.0px;line-height:11.0px;transform:scaleX(0.8098);transform-origin:0 0;"><span style="color:#b4b8bc">    puts(strings)</span><span style="color:#8a6444">;</span></div>
<div class="c" style="left:432.60px;top:292.65px;font-size:11.0px;line-height:11.0px;transform:scaleX(0.8182);transform-origin:0 0;"><span style="color:#4a4c4e">14</span></div>
<div class="c" style="left:481.00px;top:292.65px;font-size:11.0px;line-height:11.0px;transform:scaleX(0.8098);transform-origin:0 0;"><span style="color:#b4b8bc">    </span><span style="color:#c5844a">return</span><span style="color:#b4b8bc"> -1</span><span style="color:#8a6444">;</span></div>
<div class="c" style="left:432.60px;top:308.40px;font-size:11.0px;line-height:11.0px;transform:scaleX(0.8182);transform-origin:0 0;"><span style="color:#4a4c4e">15</span></div>
<div class="c" style="left:481.00px;top:308.40px;font-size:11.0px;line-height:11.0px;transform:scaleX(0.8098);transform-origin:0 0;"><span style="color:#b4b8bc">}</span></div>
<div class="c" style="left:432.60px;top:324.15px;font-size:11.0px;line-height:11.0px;transform:scaleX(0.8182);transform-origin:0 0;"><span style="color:#4a4c4e">16</span></div>
<div class="c" style="left:432.60px;top:339.90px;font-size:11.0px;line-height:11.0px;transform:scaleX(0.8182);transform-origin:0 0;"><span style="color:#4a4c4e">17</span></div>
<div class="c" style="left:481.00px;top:339.90px;font-size:11.0px;line-height:11.0px;transform:scaleX(0.8098);transform-origin:0 0;"><span style="color:#b4b8bc"> </span><span style="color:#c5844a">int</span><span style="color:#b4b8bc"> </span><span style="color:#e8c46a;font-weight:bold">hook</span><span style="color:#b4b8bc">()</span></div>
<div class="c" style="left:432.60px;top:355.65px;font-size:11.0px;line-height:11.0px;transform:scaleX(0.8182);transform-origin:0 0;"><span style="color:#4a4c4e">18</span></div>
<div class="c" style="left:481.00px;top:355.65px;font-size:11.0px;line-height:11.0px;transform:scaleX(0.8098);transform-origin:0 0;"><span style="color:#b4b8bc"> {</span></div>
<div class="c" style="left:432.60px;top:371.40px;font-size:11.0px;line-height:11.0px;transform:scaleX(0.8182);transform-origin:0 0;"><span style="color:#4a4c4e">19</span></div>
<div class="c" style="left:481.00px;top:371.40px;font-size:11.0px;line-height:11.0px;transform:scaleX(0.8098);transform-origin:0 0;"><span style="color:#b4b8bc">     </span><span style="color:#c5844a">if</span><span style="color:#b4b8bc"> (registerInlineHook((uint32_t) puts</span><span style="color:#8a6444">,</span><span style="color:#b4b8bc"> (uint32_t) new_puts</span><span style="color:#8a6444">,</span><span style="color:#b4b8bc"> (uint32_t **) &amp;old_puts) != </span><span style="color:#8c7c9c;font-style:italic">ELETEN_OK</span><span style="color:#b4b8bc">) {</span></div>
<div class="c" style="left:432.60px;top:387.15px;font-size:11.0px;line-height:11.0px;transform:scaleX(0.8182);transform-origin:0 0;"><span style="color:#4a4c4e">20</span></div>
<div class="c" style="left:481.00px;top:387.15px;font-size:11.0px;line-height:11.0px;transform:scaleX(0.8098);transform-origin:0 0;"><span style="color:#b4b8bc">         </span><span style="color:#c5844a">return</span><span style="color:#b4b8bc"> -1</span><span style="color:#8a6444">;</span></div>
<div class="c" style="left:432.60px;top:402.90px;font-size:11.0px;line-height:11.0px;transform:scaleX(0.8182);transform-origin:0 0;"><span style="color:#4a4c4e">21</span></div>
<div class="c" style="left:481.00px;top:402.90px;font-size:11.0px;line-height:11.0px;transform:scaleX(0.8098);transform-origin:0 0;"><span style="color:#b4b8bc">     }</span></div>
<div class="c" style="left:432.60px;top:418.65px;font-size:11.0px;line-height:11.0px;transform:scaleX(0.8182);transform-origin:0 0;"><span style="color:#4a4c4e">22</span></div>
<div class="c" style="left:481.00px;top:418.65px;font-size:11.0px;line-height:11.0px;transform:scaleX(0.8098);transform-origin:0 0;"><span style="color:#b4b8bc">     </span><span style="color:#c5844a">if</span><span style="color:#b4b8bc"> (inlineHook((uint32_t) puts) != </span><span style="color:#8c7c9c;font-style:italic">ELETEN_OK</span><span style="color:#b4b8bc">) {</span></div>
<svg class="a" style="left:471px;top:104px;" width="9" height="9" viewBox="0 0 9 9"><rect x="0.5" y="0.5" width="8" height="8" rx="2" fill="#313335" stroke="#5a5c5e"/><path d="M2.5 4.5H6.5" stroke="#6a6c6e"/></svg>
<svg class="a" style="left:471px;top:151px;" width="9" height="9" viewBox="0 0 9 9"><rect x="0.5" y="0.5" width="8" height="8" rx="2" fill="#313335" stroke="#5a5c5e"/><path d="M2.5 4.5H6.5" stroke="#6a6c6e"/></svg>
<svg class="a" style="left:471px;top:246px;" width="9" height="9" viewBox="0 0 9 9"><rect x="0.5" y="0.5" width="8" height="8" rx="2" fill="#313335" stroke="#5a5c5e"/><path d="M2.5 4.5H6.5" stroke="#6a6c6e"/></svg>
<svg class="a" style="left:471px;top:309px;" width="9" height="9" viewBox="0 0 9 9"><rect x="0.5" y="0.5" width="8" height="8" rx="2" fill="#313335" stroke="#5a5c5e"/><path d="M2.5 4.5H6.5" stroke="#6a6c6e"/></svg>
<svg class="a" style="left:471px;top:340px;" width="9" height="9" viewBox="0 0 9 9"><rect x="0.5" y="0.5" width="8" height="8" rx="2" fill="#313335" stroke="#5a5c5e"/><path d="M2.5 4.5H6.5" stroke="#6a6c6e"/></svg>
<div class="a" style="left:430px;top:433px;width:832px;height:16px;background:#333537;"></div>
<div class="a" style="left:17px;top:449px;width:1245px;height:7px;background:#38393a;"></div>
<div class="a" style="left:1262px;top:59px;width:18px;height:524px;background:#3c3f41;"></div>
<div class="a" style="left:1261px;top:59px;width:1px;height:524px;background:#2f3133;"></div>
<svg class="a" style="left:1265px;top:68px;" width="12" height="11" viewBox="0 0 12 11"><path d="M1 10 Q2 3 7 3 L11 1 L10 5 Q9 10 5 10 Z" fill="#c8c8c8"/></svg>
<div class="t" style="left:1253.55px;top:89.43px;width:30.50px;font-size:11px;line-height:11px;letter-spacing:-1.300px;color:#d0d0d0;transform:rotate(90deg);text-align:center">Gradle</div>
<div class="a" style="left:17px;top:456px;width:1245px;height:127px;background:#3c3f41;"></div>
<div class="a" style="left:17px;top:456px;width:1245px;height:19px;background:#3d4450;"></div>
<div class="a" style="left:60px;top:456px;width:89px;height:19px;background:#363c46;"></div>
<div class="a" style="left:149px;top:456px;width:47px;height:19px;background:#404958;"></div>
<div class="t" style="left:23.20px;top:459.96px;color:#b9c2cc;font-size:12px;line-height:12px;letter-spacing:-0.540px;">Build:</div>
<div class="t" style="left:66.00px;top:459.96px;color:#c4ccd4;font-size:12px;line-height:12px;letter-spacing:-0.369px;">Build Output</div>
<svg class="a" style="left:134px;top:463px;" width="6" height="7" viewBox="0 0 6 7"><path d="M0.5 0.5 L5.5 6.5 M5.5 0.5 L0.5 6.5" stroke="#4f5763" stroke-width="1"/></svg>
<div class="t" style="left:160.00px;top:459.96px;color:#c4ccd4;font-size:12px;line-height:12px;letter-spacing:-1.733px;">Sync</div>
<svg class="a" style="left:189px;top:463px;" width="6" height="7" viewBox="0 0 6 7"><path d="M0.5 0.5 L5.5 6.5 M5.5 0.5 L0.5 6.5" stroke="#4f5763" stroke-width="1"/></svg>
<svg class="a" style="left:1224px;top:461px;" width="11" height="11" viewBox="0 0 11 11"><circle cx="5.5" cy="5.5" r="4" fill="none" stroke="#c8c8c8" stroke-width="2.4" stroke-dasharray="2 1.1"/><circle cx="5.5" cy="5.5" r="3" fill="#c8c8c8"/><circle cx="5.5" cy="5.5" r="1.3" fill="#3d4450"/></svg>
<div class="a" style="left:1245px;top:465px;width:11px;height:2px;background:#c8c8c8;"></div>
<div class="a" style="left:17px;top:475px;width:1245px;height:1px;background:#2f3133;"></div>
<div class="a" style="left:17px;top:476px;width:25px;height:107px;background:#3c3f41;"></div>
<div class="a" style="left:41px;top:476px;width:1px;height:107px;background:#2f3133;"></div>
<svg class="a" style="left:22px;top:482px;" width="14" height="14" viewBox="0 0 14 14"><g transform="rotate(-45 7 7)"><rect x="1.5" y="1.5" width="11" height="4.5" rx="0.8" fill="#4e9a55"/><rect x="5.5" y="5" width="3" height="9" fill="#4e9a55"/></g></svg>
<svg class="a" style="left:24px;top:512px;" width="12" height="12" viewBox="0 0 12 12"><rect x="0.5" y="0.5" width="8" height="7" fill="none" stroke="#c0c0c0"/><rect x="3.5" y="4" width="8" height="7.5" fill="#c0c0c0"/><path d="M6 6 L8 7.7 L6 9.5" stroke="#3c3f41" fill="none"/></svg>
<svg class="a" style="left:24px;top:537px;" width="12" height="13" viewBox="0 0 12 13"><path d="M7 1 L11 5 L8.5 6 L6 8.5 L5 12 L1 12.5 L4 9 L3.5 6 Z" fill="#c0c0c0"/></svg>
<div class="a" style="left:42px;top:476px;width:613px;height:107px;background:#3c3f41;"></div>
<div class="a" style="left:42px;top:477px;width:602px;height:15px;background:#4b6eaf;"></div>
<div class="a" style="left:644px;top:478px;width:7px;height:73px;background:#4f5254;border-radius:3px"></div>
<div class="a" style="left:651px;top:476px;width:6px;height:107px;background:#323436;"></div>
<svg class="a" style="left:45px;top:481px;" width="8" height="7" viewBox="0 0 8 7"><path d="M0 0.5 H8 L4 6.5 Z" fill="#d8e0f0"/></svg>
<svg class="a" style="left:61px;top:479px;" width="11" height="11" viewBox="0 0 11 11"><circle cx="5.5" cy="5.5" r="5.2" fill="#c75450"/></svg>
<div class="t" style="left:75.80px;top:477.96px;color:#eef2f8;font-size:12px;line-height:12px;letter-spacing:-1.024px;font-weight:bold;">Build:</div>
<div class="t" style="left:106.00px;top:477.96px;color:#eef2f8;font-size:12px;line-height:12px;letter-spacing:-0.419px;">build failed at 2020/9/2 20:56</div>
<div class="t" style="left:595.70px;top:477.96px;color:#dfe6f2;font-size:12px;line-height:12px;letter-spacing:-0.840px;">6 s 49 ms</div>
<svg class="a" style="left:61px;top:495px;" width="8" height="7" viewBox="0 0 8 7"><path d="M0 0.5 H8 L4 6.5 Z" fill="#a9acaf"/></svg>
<svg class="a" style="left:75px;top:493px;" width="11" height="11" viewBox="0 0 11 11"><circle cx="5.5" cy="5.5" r="5.2" fill="#c75450"/><path d="M5.5 2.3V6.5M5.5 7.6V8.9" stroke="#f4dcdc" stroke-width="1.6"/></svg>
<div class="t" style="left:90.00px;top:491.96px;color:#bbbbbb;font-size:12px;line-height:12px;letter-spacing:-0.713px;">Run build</div>
<div class="t" style="left:138.00px;top:491.96px;color:#6c6f73;font-size:12px;line-height:12px;letter-spacing:-0.389px;">E:\app\TestHook</div>
<div class="t" style="left:589.50px;top:491.96px;color:#7a7d81;font-size:12px;line-height:12px;letter-spacing:-0.798px;">5 s 848 ms</div>
<svg class="a" style="left:76px;top:508px;" width="7" height="8" viewBox="0 0 7 8"><path d="M0.5 0 L6.5 4 L0.5 8 Z" fill="#a9acaf"/></svg>
<svg class="a" style="left:90.8px;top:507px;" width="12" height="10" viewBox="0 0 12 10"><path d="M1 5 L4.5 8.5 L11 1.5" fill="none" stroke="#5fb84f" stroke-width="2.2"/></svg>
<div class="t" style="left:105.70px;top:505.96px;color:#bbbbbb;font-size:12px;line-height:12px;letter-spacing:-0.564px;">Load build</div>
<div class="t" style="left:619.00px;top:505.96px;color:#7a7d81;font-size:12px;line-height:12px;letter-spacing:-1.327px;">4 ms</div>
<svg class="a" style="left:76px;top:523px;" width="7" height="8" viewBox="0 0 7 8"><path d="M0.5 0 L6.5 4 L0.5 8 Z" fill="#a9acaf"/></svg>
<svg class="a" style="left:90.8px;top:522px;" width="12" height="10" viewBox="0 0 12 10"><path d="M1 5 L4.5 8.5 L11 1.5" fill="none" stroke="#5fb84f" stroke-width="2.2"/></svg>
<div class="t" style="left:105.70px;top:519.96px;color:#bbbbbb;font-size:12px;line-height:12px;letter-spacing:-0.421px;">Configure build</div>
<div class="t" style="left:607.50px;top:519.96px;color:#7a7d81;font-size:12px;line-height:12px;letter-spacing:-1.172px;">180 ms</div>
<svg class="a" style="left:90.8px;top:536px;" width="12" height="10" viewBox="0 0 12 10"><path d="M1 5 L4.5 8.5 L11 1.5" fill="none" stroke="#5fb84f" stroke-width="2.2"/></svg>
<div class="t" style="left:105.70px;top:534.46px;color:#bbbbbb;font-size:12px;line-height:12px;letter-spacing:-0.652px;">Calculate task graph</div>
<div class="t" style="left:607.50px;top:534.46px;color:#7a7d81;font-size:12px;line-height:12px;letter-spacing:-1.172px;">560 ms</div>
<svg class="a" style="left:76px;top:552px;" width="8" height="7" viewBox="0 0 8 7"><path d="M0 0.5 H8 L4 6.5 Z" fill="#a9acaf"/></svg>
<svg class="a" style="left:90.8px;top:549px;" width="11" height="11" viewBox="0 0 11 11"><circle cx="5.5" cy="5.5" r="5.2" fill="#c75450"/><path d="M5.5 2.3V6.5M5.5 7.6V8.9" stroke="#f4dcdc" stroke-width="1.6"/></svg>
<div class="t" style="left:105.70px;top:547.96px;color:#bbbbbb;font-size:12px;line-height:12px;letter-spacing:-1.055px;">Run tasks</div>
<div class="t" style="left:595.70px;top:547.96px;color:#7a7d81;font-size:12px;line-height:12px;letter-spacing:-0.840px;">5 s 82 ms</div>
<svg class="a" style="left:90.8px;top:565px;" width="7" height="8" viewBox="0 0 7 8"><path d="M0.5 0 L6.5 4 L0.5 8 Z" fill="#a9acaf"/></svg>
<svg class="a" style="left:105.7px;top:564px;" width="12" height="10" viewBox="0 0 12 10"><path d="M1 5 L4.5 8.5 L11 1.5" fill="none" stroke="#5fb84f" stroke-width="2.2"/></svg>
<div class="t" style="left:119.60px;top:562.46px;color:#bbbbbb;font-size:12px;line-height:12px;letter-spacing:-0.728px;">:clean</div>
<div class="t" style="left:613.70px;top:562.46px;color:#7a7d81;font-size:12px;line-height:12px;letter-spacing:-1.350px;">10 ms</div>
<svg class="a" style="left:90.8px;top:579px;" width="7" height="8" viewBox="0 0 7 8"><path d="M0.5 0 L6.5 4 L0.5 8 Z" fill="#a9acaf"/></svg>
<svg class="a" style="left:105.7px;top:578px;" width="12" height="10" viewBox="0 0 12 10"><path d="M1 5 L4.5 8.5 L11 1.5" fill="none" stroke="#5fb84f" stroke-width="2.2"/></svg>
<div class="t" style="left:119.60px;top:576.46px;color:#bbbbbb;font-size:12px;line-height:12px;letter-spacing:-0.558px;">:app:externalNativeBuildCleanDebug</div>
<div class="t" style="left:607.50px;top:576.46px;color:#7a7d81;font-size:12px;line-height:12px;letter-spacing:-1.172px;">393 ms</div>
<div class="a" style="left:657px;top:476px;width:571px;height:107px;background:#2b2b2b;"></div>
<div class="a" style="left:1228px;top:476px;width:9px;height:107px;background:#38393b;"></div>
<div class="a" style="left:1229px;top:476px;width:7px;height:107px;background:#3e4042;"></div>
<div class="a" style="left:1237px;top:476px;width:20px;height:107px;background:#3c3f41;"></div>
<div class="a" style="left:1257px;top:476px;width:5px;height:107px;background:#323436;"></div>
<div class="c" style="left:670.00px;top:481.60px;font-size:11.0px;line-height:11.0px;transform:scaleX(0.8068);transform-origin:0 0;"><span style="color:#cc6363">Build command failed.</span></div>
<div class="c" style="left:670.00px;top:497.60px;font-size:11.0px;line-height:11.0px;transform:scaleX(0.8068);transform-origin:0 0;"><span style="color:#cc6363">Error while executing process D:\AdroidSdk\cmake\3.6.4111459\bin\cmake.exe with arguments {--build E:\app\</span></div>
<div class="c" style="left:670.00px;top:513.60px;font-size:11.0px;line-height:11.0px;transform:scaleX(0.8068);transform-origin:0 0;"><span style="color:#cc6363">[1/2] Building C object CMakeFiles/testhook.dir/src/main/jni/main.c.o</span></div>
<div class="c" style="left:670.00px;top:529.60px;font-size:11.0px;line-height:11.0px;transform:scaleX(0.8068);transform-origin:0 0;"><span style="color:#cc6363">[2/2] Linking C shared library ..\..\..\..\build\intermediates\cmake\debug\obj\armeabi-v7a\libtesthook.so</span></div>
<div class="c" style="left:670.00px;top:545.60px;font-size:11.0px;line-height:11.0px;transform:scaleX(0.8068);transform-origin:0 0;"><span style="color:#cc6363">FAILED: cmd.exe /C "cd . &amp;&amp; D:\AdroidSdk\ndk\20.0.5594570\toolchains\llvm\prebuilt\windows-x86_64\bin\clan</span></div>
<div class="c" style="left:670.00px;top:561.60px;font-size:11.0px;line-height:11.0px;transform:scaleX(0.8068);transform-origin:0 0;"><span style="color:#4a86c8;text-decoration:underline">E:\app\TestHook\app\src\main\jni\main.c:19</span><span style="color:#a8a8a8">: error: undefined reference to 'registerInlineHook'</span></div>
<div class="a" style="left:1058px;top:560px;width:1px;height:12px;background:#e0e0e0;"></div>
<svg class="a" style="left:1245px;top:484px;" width="10" height="11" viewBox="0 0 10 11"><path d="M5 1 V11 M1 5 L5 1 L9 5" fill="none" stroke="#c0c0c0" stroke-width="1.4"/></svg>
<svg class="a" style="left:1245px;top:505px;" width="10" height="11" viewBox="0 0 10 11"><path d="M5 0 V10 M1 6 L5 10 L9 6" fill="none" stroke="#c0c0c0" stroke-width="1.4"/></svg>
<svg class="a" style="left:1245px;top:527px;" width="11" height="11" viewBox="0 0 11 11"><path d="M0 1H10M0 5H8A2.5 2.5 0 0 1 8 10H5M0 10H3" fill="none" stroke="#c0c0c0" stroke-width="1.3"/><path d="M5 8 L3.5 10 L5 12" fill="none" stroke="#c0c0c0"/></svg>
<svg class="a" style="left:1245px;top:548px;" width="11" height="11" viewBox="0 0 11 11"><path d="M0 1H10M0 10H10M5 3V8M3 6L5 8L7 6" fill="none" stroke="#c0c0c0" stroke-width="1.3"/></svg>
<svg class="a" style="left:1245px;top:570px;" width="11" height="13" viewBox="0 0 11 13"><rect x="2" y="0" width="7" height="4" fill="#c0c0c0"/><rect x="0" y="4" width="11" height="6" fill="#c0c0c0"/><rect x="2" y="8" width="7" height="5" fill="#e0e0e0"/></svg>
<div class="a" style="left:1270px;top:474px;width:10px;height:54px;background:#2a3242;"></div>
<div class="a" style="left:1273px;top:477px;width:6px;height:18px;background:#3a4a78;"></div>
<div class="a" style="left:1273px;top:495px;width:6px;height:27px;background:#5c9a62;background:linear-gradient(#6aa85a,#3a8a86)"></div>
<svg class="a" style="left:1266px;top:537px;" width="9" height="11" viewBox="0 0 9 11"><rect x="0.5" y="0.5" width="8" height="10" fill="none" stroke="#c0c0c0" stroke-width="1.2"/><rect x="2" y="3" width="5" height="1.2" fill="#c0c0c0"/></svg>
<div class="t" style="left:1232.00px;top:578.68px;width:73.00px;font-size:11px;line-height:11px;letter-spacing:-1.550px;color:#bbbbbb;transform:rotate(90deg);text-align:center">Device File Explorer</div>
<svg class="a" style="left:0px;top:0px;pointer-events:none" width="1280" height="583" viewBox="0 0 1280 583"><path d="M842.8 473 L844.6 472.6 L882.6 525.5 L879.2 528 Z" fill="#ea3a46"/><path d="M888 541 L873.8 529.4 L882.8 523.4 Z" fill="#ea3a46"/></svg>
</body></html>
